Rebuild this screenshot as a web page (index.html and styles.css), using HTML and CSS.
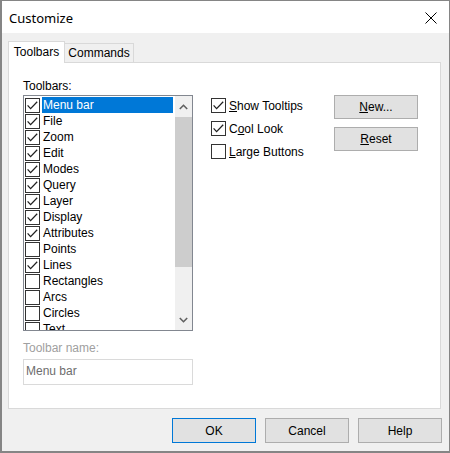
FILE: index.html
```html
<!DOCTYPE html>
<html>
<head>
<meta charset="utf-8">
<link rel="stylesheet" href="styles.css">
</head>
<body>
<div class="win">
  <div class="titlebar">
    <span class="title">Customize</span>
    <svg class="close" width="12" height="12" viewBox="0 0 12 12"><path d="M0.5 0.5 L11.5 11.5 M11.5 0.5 L0.5 11.5" stroke="#000" stroke-width="1" fill="none"/></svg>
  </div>
  <div class="body">
    <div class="tabs">
      <div class="tab active">Toolbars</div>
      <div class="tab">Commands</div>
    </div>
    <div class="panel">
      <div class="leftcol">
        <div class="lab">Toolbars:</div>
        <div class="listbox">
          <div class="items">
            <div class="row"><span class="cb on"></span><span class="lbl sel">Menu bar</span></div>
            <div class="row"><span class="cb on"></span><span class="lbl">File</span></div>
            <div class="row"><span class="cb on"></span><span class="lbl">Zoom</span></div>
            <div class="row"><span class="cb on"></span><span class="lbl">Edit</span></div>
            <div class="row"><span class="cb on"></span><span class="lbl">Modes</span></div>
            <div class="row"><span class="cb on"></span><span class="lbl">Query</span></div>
            <div class="row"><span class="cb on"></span><span class="lbl">Layer</span></div>
            <div class="row"><span class="cb on"></span><span class="lbl">Display</span></div>
            <div class="row"><span class="cb on"></span><span class="lbl">Attributes</span></div>
            <div class="row"><span class="cb"></span><span class="lbl">Points</span></div>
            <div class="row"><span class="cb on"></span><span class="lbl">Lines</span></div>
            <div class="row"><span class="cb"></span><span class="lbl">Rectangles</span></div>
            <div class="row"><span class="cb"></span><span class="lbl">Arcs</span></div>
            <div class="row"><span class="cb"></span><span class="lbl">Circles</span></div>
            <div class="row"><span class="cb"></span><span class="lbl">Text</span></div>
          </div>
          <div class="sb">
            <div class="sb-btn up"><svg width="9" height="6" viewBox="0 0 9 6"><polyline points="0.8,5 4.5,1.3 8.2,5" fill="none" stroke="#606060" stroke-width="1.6"/></svg></div>
            <div class="thumb"></div>
            <div class="track"></div>
            <div class="sb-btn down"><svg width="9" height="6" viewBox="0 0 9 6"><polyline points="0.8,1 4.5,4.7 8.2,1" fill="none" stroke="#606060" stroke-width="1.6"/></svg></div>
          </div>
        </div>
        <div class="lab dis name-lab">Toolbar name:</div>
        <div class="input">Menu bar</div>
      </div>
      <div class="midcol">
        <div class="opt"><span class="cb on"></span><span><u>S</u>how Tooltips</span></div>
        <div class="opt"><span class="cb on"></span><span>C<u>o</u>ol Look</span></div>
        <div class="opt"><span class="cb"></span><span><u>L</u>arge Buttons</span></div>
      </div>
      <div class="btncol">
        <div class="btn small"><span><u>N</u>ew...</span></div>
        <div class="btn small"><span><u>R</u>eset</span></div>
      </div>
    </div>
    <div class="footer">
      <div class="btn def">OK</div>
      <div class="btn">Cancel</div>
      <div class="btn">Help</div>
    </div>
  </div>
</div>
</body>
</html>
```
FILE: styles.css
```css
html, body {
  margin: 0;
  padding: 0;
  background: #ffffff;
}
body {
  font-family: "Liberation Sans", Arial, sans-serif;
  font-size: 12px;
  color: #000;
}
.win {
  width: 450px;
  height: 453px;
  box-sizing: border-box;
  border: 1px solid #858585;
  border-left-width: 2px;
  border-bottom-width: 2px;
  background: #f0f0f0;
  display: flex;
  flex-direction: column;
}
.titlebar {
  height: 32px;
  background: #fff;
  display: flex;
  align-items: center;
  justify-content: space-between;
  padding: 0 12px 0 7px;
  flex: none;
}
.title {
  font-family: "Noto Sans", "Open Sans", sans-serif;
  font-size: 13px;
  position: relative;
  top: 1px;
}
.close {
  display: block;
  position: relative;
  top: 1px;
}
.body {
  flex: 1;
  padding: 8px 8px 0 6px;
  display: flex;
  flex-direction: column;
}
.tabs {
  display: flex;
  height: 22px;
  position: relative;
  z-index: 2;
}
.tab {
  box-sizing: border-box;
  border: 1px solid #d9d9d9;
  border-bottom: none;
  text-align: center;
  background: #f0f0f0;
}
.tab.active {
  width: 57px;
  height: 22px;
  background: #fff;
  line-height: 20px;
}
.tab:not(.active) {
  width: 69px;
  height: 19px;
  margin-top: 2px;
  line-height: 19px;
  border-left: none;
}
.panel {
  margin-top: -1px;
  height: 347px;
  box-sizing: border-box;
  border: 1px solid #d9d9d9;
  background: #fff;
  padding: 16px 0 0 14px;
  display: flex;
  align-items: flex-start;
}
.leftcol {
  width: 170px;
  display: flex;
  flex-direction: column;
}
.lab {
  line-height: 14px;
  height: 14px;
  margin-bottom: 2px;
}
.dis {
  color: #a0a0a0;
}
.name-lab {
  margin-top: 10px;
  margin-bottom: 4px;
}
.listbox {
  height: 236px;
  box-sizing: border-box;
  border: 1px solid #828790;
  display: flex;
  overflow: hidden;
  background: #fff;
}
.items {
  flex: 1;
  padding: 1px 0 0 1px;
  overflow: hidden;
}
.row {
  height: 16px;
  display: flex;
  align-items: center;
}
.cb {
  width: 15px;
  height: 15px;
  box-sizing: border-box;
  border: 1px solid #333;
  background: #fff;
  flex: none;
  margin-right: 2px;
}
.cb.on {
  background: #fff url("data:image/svg+xml,%3Csvg xmlns='http://www.w3.org/2000/svg' width='13' height='13' viewBox='0 0 13 13'%3E%3Cpolyline points='1.6,6.4 4.6,9.6 11.2,2.8' fill='none' stroke='%23202020' stroke-width='1.3'/%3E%3C/svg%3E") no-repeat 0 0;
}
.lbl {
  flex: 1;
  height: 16px;
  line-height: 16px;
  padding-left: 1px;
  white-space: nowrap;
}
.lbl.sel {
  background: #0078d7;
  color: #fff;
}
.sb {
  width: 17px;
  margin-left: 2px;
  background: #f0f0f0;
  display: flex;
  flex-direction: column;
  flex: none;
}
.sb-btn {
  display: flex;
  align-items: center;
  justify-content: center;
  flex: none;
}
.sb-btn svg {
  display: block;
}
.sb-btn.up {
  height: 21px;
}
.sb-btn.down {
  height: 20px;
}
.thumb {
  height: 150px;
  background: #cdcdcd;
  flex: none;
}
.track {
  flex: 1;
}
.input {
  height: 26px;
  box-sizing: border-box;
  border: 1px solid #dadada;
  background: #fff;
  color: #6d6d6d;
  line-height: 22px;
  padding-left: 2px;
}
.midcol {
  width: 124px;
  margin-left: 17px;
  margin-top: 15px;
  display: flex;
  flex-direction: column;
}
.opt {
  height: 23px;
  display: flex;
  align-items: center;
}
.opt .cb {
  margin-right: 3px;
  margin-left: 1px;
}
.btncol {
  width: 84px;
  margin-top: 16px;
  display: flex;
  flex-direction: column;
  gap: 8px;
}
.btn {
  width: 84px;
  height: 25px;
  box-sizing: border-box;
  background: #e1e1e1;
  border: 1px solid #adadad;
  display: flex;
  align-items: center;
  justify-content: center;
}
.btn.small {
  height: 24px;
}
.btn.def {
  border-color: #0078d7;
}
.footer {
  display: flex;
  justify-content: flex-end;
  gap: 9px;
  padding-top: 9px;
  margin-right: -1px;
}
```
